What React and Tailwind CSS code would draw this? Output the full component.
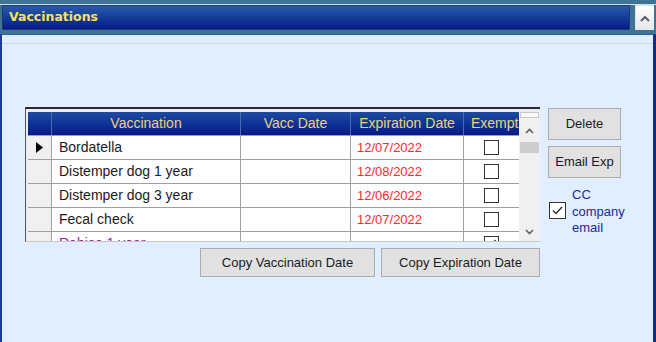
import React from "react";

const rows = [
  { name: "Bordatella", exp: "12/07/2022", sel: true },
  { name: "Distemper dog 1 year", exp: "12/08/2022" },
  { name: "Distemper dog 3 year", exp: "12/06/2022" },
  { name: "Fecal check", exp: "12/07/2022" },
  { name: "Rabies 1 year", exp: "", purple: true, checked: true },
];

function Box({ checked }) {
  return (
    <div className="w-[15px] h-[15px] border border-[#333] bg-white flex items-center justify-center">
      {checked && (
        <svg width="11" height="11" viewBox="0 0 11 11">
          <path d="M1.5 5.5 L4.2 8.2 L9.5 2" stroke="#333" strokeWidth="1.4" fill="none" />
        </svg>
      )}
    </div>
  );
}

export default function App() {
  return (
    <div
      className="w-[656px] h-[342px] bg-[#3f7393] flex flex-col overflow-hidden"
      style={{ fontFamily: '"Liberation Sans", Arial, sans-serif' }}
    >
      {/* title bar */}
      <div className="h-[5px] border-b border-[#cfe0ea]" />
      <div className="flex h-[25px] mx-[2px]">
        <div className="flex-1 bg-gradient-to-b from-[#2a5aa8] to-[#08168a] border border-[#1b3d70] flex items-center pl-[6px]">
          <span
            className="text-[12.5px] font-bold text-[#efe070]"
            style={{ fontFamily: '"DejaVu Sans", sans-serif', textShadow: "0 0 1px #4a4a20" }}
          >
            Vaccinations
          </span>
        </div>
        <div className="w-[5px]" />
        <div className="w-[19px] bg-gradient-to-b from-[#ffffff] to-[#e4e8ec] border-l border-t border-[#d8e4ec] flex items-center justify-center">
          <svg width="10" height="7" viewBox="0 0 10 7">
            <path d="M1 6 L5 2 L9 6" stroke="#606060" strokeWidth="2" fill="none" />
          </svg>
        </div>
      </div>
      <div className="h-[4px]" />
      {/* panel */}
      <div className="flex-1 bg-[#e1eeff] border-l-2 border-l-[#1c3c9c] border-r-[3px] border-r-[#122a8c] border-t border-t-[#2e5ea0] flex flex-col">
        <div className="h-[8px]" />
        <div className="h-px bg-[#cdd6e2]" />
        <div className="h-[63px]" />
        <div className="flex">
          <div className="w-[23px]" />
          <div className="flex flex-col">
            {/* grid */}
            <div className="w-[515px] h-[135px] border-t-2 border-t-[#2a2a2a] border-l border-l-[#555] border-b border-b-[#c8c8c8] bg-[#e6edf5] pt-[3px] pl-[2px] overflow-hidden flex">
              <div className="w-[491px] flex flex-col text-[14px] bg-white overflow-hidden">
                <div className="flex h-[23px] shrink-0 bg-gradient-to-b from-[#1e4aa0] to-[#08178a] text-[#e8d47a]">
                  <div className="w-[24px] border-r border-[#4a6ab0]" />
                  <div className="w-[189px] border-r border-[#4a6ab0] flex items-center justify-center">Vaccination</div>
                  <div className="w-[110px] border-r border-[#4a6ab0] flex items-center justify-center">Vacc Date</div>
                  <div className="w-[113px] border-r border-[#4a6ab0] flex items-center justify-center">Expiration Date</div>
                  <div className="w-[55px] flex items-center pl-[7px] whitespace-nowrap overflow-hidden">Exempt</div>
                </div>
                {rows.map((r, i) => (
                  <div key={i} className="flex h-[24px] border-t border-[#a0a0a0] shrink-0">
                    <div className="w-[24px] bg-[#f0f0f0] border-r border-[#a0a0a0] flex items-center justify-center">
                      {r.sel && (
                        <svg width="7" height="11" viewBox="0 0 7 11">
                          <path d="M0 0 L7 5.5 L0 11 Z" fill="#000" />
                        </svg>
                      )}
                    </div>
                    <div
                      className={`w-[189px] border-r border-[#a0a0a0] flex items-center pl-[7px] ${
                        r.purple ? "text-[#a020a0]" : "text-[#1a1a1a]"
                      }`}
                    >
                      {r.name}
                    </div>
                    <div className="w-[110px] border-r border-[#a0a0a0]" />
                    <div className="w-[113px] border-r border-[#a0a0a0] flex items-center pl-[6px] text-[13px] text-[#ff2a2a]">
                      {r.exp}
                    </div>
                    <div className="w-[55px] flex items-center justify-center">
                      <Box checked={r.checked} />
                    </div>
                  </div>
                ))}
              </div>
              {/* scrollbar */}
              <div className="w-[21px] bg-[#f0f0f0] flex flex-col items-center">
                <div className="w-[19px] h-[6px] bg-[#f8f8f8] border border-[#c8c8c8]" />
                <div className="h-[10px]" />
                <svg width="9" height="6" viewBox="0 0 9 6">
                  <path d="M1 5 L4.5 1.5 L8 5" stroke="#606060" strokeWidth="1.6" fill="none" />
                </svg>
                <div className="h-[8px]" />
                <div className="w-[19px] h-[11px] bg-[#cdcdcd]" />
                <div className="flex-1" />
                <svg width="9" height="6" viewBox="0 0 9 6">
                  <path d="M1 1 L4.5 4.5 L8 1" stroke="#606060" strokeWidth="1.6" fill="none" />
                </svg>
                <div className="h-[6px]" />
              </div>
            </div>
            {/* bottom buttons */}
            <div className="flex pl-[175px] gap-[6px] mt-[6px] text-[13px] text-[#1a1a1a]">
              <button className="w-[175px] h-[29px] bg-[#e1e1e1] border border-[#adadad] flex items-center justify-center">
                Copy Vaccination Date
              </button>
              <button className="w-[159px] h-[29px] bg-[#e1e1e1] border border-[#adadad] flex items-center justify-center">
                Copy Expiration Date
              </button>
            </div>
          </div>
          <div className="w-[8px]" />
          <div className="flex flex-col mt-[1px] text-[13px]">
            <button className="w-[73px] h-[32px] bg-[#e1e1e1] border border-[#adadad] text-[#1a1a1a] flex items-center justify-center">
              Delete
            </button>
            <button className="mt-[6px] w-[73px] h-[32px] bg-[#e1e1e1] border border-[#adadad] text-[#1a1a1a] flex items-center justify-center">
              Email Exp
            </button>
            <div className="flex items-start">
              <div className="ml-[1px] mt-[24px] w-[17px] h-[17px] border border-[#333] bg-white flex items-center justify-center">
                <svg width="13" height="13" viewBox="0 0 13 13">
                  <path d="M2 6.5 L5 9.5 L11 3" stroke="#333" strokeWidth="1.5" fill="none" />
                </svg>
              </div>
              <div className="ml-[6px] mt-[9px] text-[#1a2a9a] leading-[16.5px] text-[13px]">
                CC
                <br />
                company
                <br />
                email
              </div>
            </div>
          </div>
        </div>
      </div>
    </div>
  );
}
